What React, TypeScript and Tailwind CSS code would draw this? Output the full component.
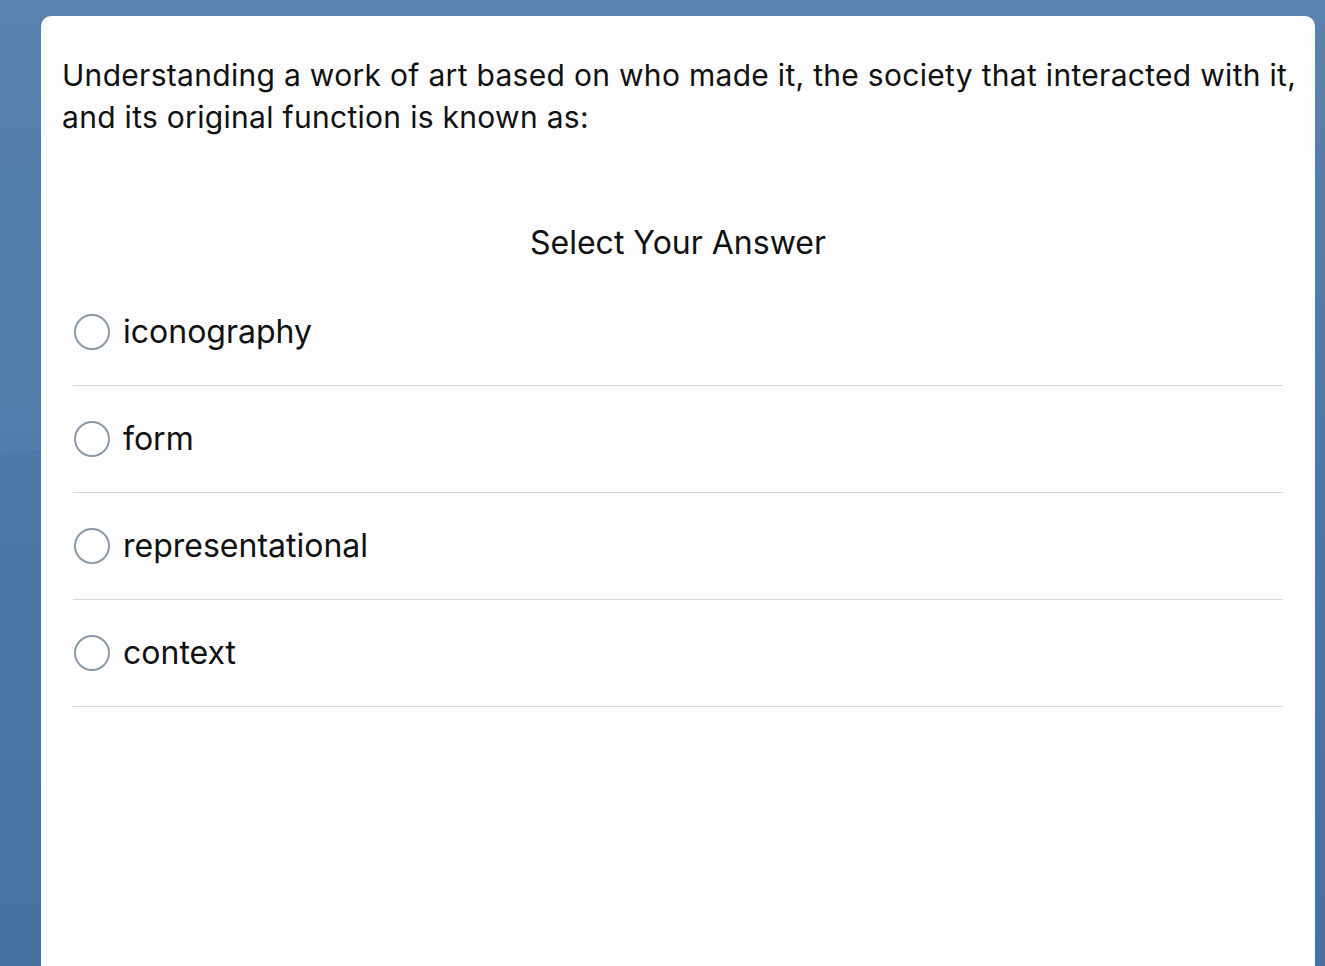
import React from "react";

const options = ["iconography", "form", "representational", "context"];

export default function App() {
  return (
    <div
      className="relative w-[1325px] h-[966px] overflow-hidden bg-[#4a76a5]"
      style={{ fontFamily: "Inter, 'Noto Sans', sans-serif" }}
    >
      <div className="absolute inset-0 bg-gradient-to-b from-[#5a82ac] via-[#4b78a7] to-[#4671a0]" />
      <div className="absolute left-[-200px] top-[180px] w-[600px] h-[260px] bg-[#5580ab] opacity-60 -rotate-[8deg] rounded-[40px]" />
      <div className="relative ml-[41px] mt-[16px] w-[1274px] h-[980px] bg-[#fdfdfd] rounded-[10px] px-[21px] pt-[38px]">
        <p className="text-[30px] leading-[42px] text-[#111] tracking-[0.3px] whitespace-nowrap">
          Understanding a work of art based on who made it, the society that interacted with it,
          <br />
          and its original function is known as:
        </p>
        <div className="mt-[85px] text-center text-[32px] leading-[40px] text-[#111]">
          Select Your Answer
        </div>
        <div className="mt-[16px] px-[11px]">
          {options.map((o) => (
            <div key={o} className="border-b border-[#d6d6d6] h-[107px] flex items-center">
              <div className="flex items-center gap-[13px]">
                <span className="w-[36px] h-[36px] rounded-full border-2 border-[#8b9aa8] bg-white ml-[1px]" />
                <span className="text-[32px] leading-[40px] text-[#111]">{o}</span>
              </div>
            </div>
          ))}
        </div>
      </div>
    </div>
  );
}
